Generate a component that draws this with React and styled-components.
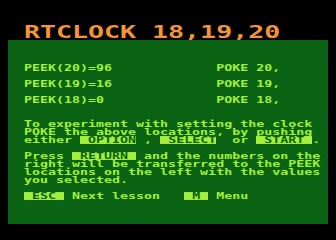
import React from 'react';
import styled, { createGlobalStyle } from 'styled-components';

const GlobalStyle = createGlobalStyle`
    html, body {
        margin: 0;
        padding: 0;
        background: #000;
    }
`

const lines = [
    [],
    [],
    [],
    ['PEEK(20)=96             POKE 20,'],
    [],
    ['PEEK(19)=16             POKE 19,'],
    [],
    ['PEEK(18)=0              POKE 18,'],
    [],
    [],
    ['To experiment with setting the clock'],
    ['POKE the above locations, by pushing'],
    ['either ', {key: ' OPTION'}, ' , ', {key: ' SELECT'}, '  or ', {key: ' START '}, '.'],
    [],
    ['Press ', {key: ' RETURN '}, ' and the numbers on the'],
    ['right will be transferred to the PEEK'],
    ['locations on the left with the values'],
    ['you selected.'],
    [],
    [{key: ' ESC '}, ' Next lesson   ', {key: ' M '}, ' Menu'],
]

const App = () => {
    return (
        <>
            <GlobalStyle />
            <Screen>
                <TitleRow>
                    <Title>RTCLOCK 18,19,20</Title>
                </TitleRow>
                <Panel>
                    {lines.map((parts, i) => (
                        <Line key={i}>
                            <Glyphs>
                                {parts.map((p, j) => typeof p === 'string'
                                    ? <React.Fragment key={j}>{p}</React.Fragment>
                                    : <Key key={j}>{p.key}</Key>
                                )}
                            </Glyphs>
                        </Line>
                    ))}
                </Panel>
            </Screen>
        </>
    )
}

export default App;


const Screen = styled.div`
    width: 336px;
    height: 240px;
    background: #000;
    padding-top: 24px;
    box-sizing: border-box;
    overflow: hidden;
`

const TitleRow = styled.div`
    height: 16px;
    padding-left: 24px;
`

const Title = styled.div`
    font-family: "DejaVu Sans Mono", "Liberation Mono", monospace;
    font-weight: bold;
    font-size: 26.6px;
    line-height: 16px;
    height: 16px;
    color: #f49438;
    white-space: pre;
    transform: scaleY(0.68);
    transform-origin: 50% 50%;
`

const Panel = styled.div`
    margin: 0 8px;
    height: 184px;
    background: #0a6414;
    padding-left: 16px;
    box-sizing: border-box;
    display: flex;
    flex-direction: column;
`

const Line = styled.div`
    height: 8px;
`

const Glyphs = styled.div`
    font-family: "DejaVu Sans Mono", "Liberation Mono", monospace;
    font-weight: bold;
    font-size: 13.3px;
    line-height: 8px;
    height: 8px;
    color: #a4f03c;
    white-space: pre;
    transform: scaleY(0.66);
    transform-origin: 50% 50%;
`

const Key = styled.span`
    display: inline-block;
    height: 12.12px;
    line-height: 12.12px;
    vertical-align: top;
    margin-top: -2.06px;
    background: #a4f03c;
    color: #0a6414;
`
